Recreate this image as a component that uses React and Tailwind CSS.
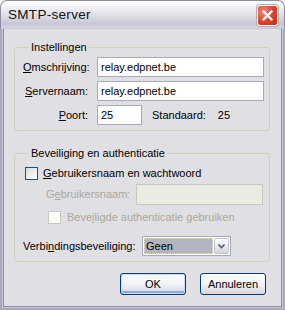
import React from 'react';

const font = { fontFamily: '"Liberation Sans", Arial, sans-serif' };

const TextBox = ({ value, className = '' }) => (
  <div className={`h-[20px] bg-white border border-[#a5acb5] flex items-center px-[3px] text-[11px] text-black ${className}`}>
    {value}
  </div>
);

const CheckBox = ({ disabled }) => (
  <div
    className={`w-[13px] h-[13px] shrink-0 border ${
      disabled
        ? 'border-[#cac8bb] bg-white'
        : 'border-[#1c5180] bg-gradient-to-br from-[#dcdcd7] to-white'
    }`}
  />
);

const Button = ({ children, isDefault }) => (
  <button
    className={`w-[66px] h-[22px] rounded-[3px] border border-[#003c74] text-[11px] text-black bg-gradient-to-b from-white via-[#f2f2f6] to-[#d6d6e0] ${
      isDefault ? 'shadow-[inset_0_0_0_1px_#c9dcf8,inset_0_-2px_0_1px_#8fa8e2]' : 'shadow-[inset_0_-2px_0_0_#d8d8e4]'
    }`}
  >
    {children}
  </button>
);

const App = () => {
  return (
    <div style={font} className="w-[285px] h-[310px] flex flex-col bg-[#a9a8bd] rounded-t-[7px] overflow-hidden">
      {/* Title bar */}
      <div className="h-[29px] shrink-0 flex items-center justify-between pl-[7px] pr-[6px] rounded-t-[7px] border border-b-0 border-[#8c8ca2] bg-[linear-gradient(to_bottom,#ffffff_0%,#f2f2f6_20%,#dcdce4_55%,#c8c8d6_80%,#d8d8e2_100%)]">
        <span className="text-[13.5px] text-[#111] tracking-[0.3px]">SMTP-server</span>
        <div className="w-[21px] h-[21px] rounded-[3px] border border-white flex items-center justify-center bg-[radial-gradient(circle_at_30%_30%,#f28b7a,#d6422e_55%,#c0321f)] shadow-[0_0_0_1px_#b8a8a8]">
          <svg width="11" height="11" viewBox="0 0 11 11">
            <path d="M1.5 1.5 L9.5 9.5 M9.5 1.5 L1.5 9.5" stroke="#fff" strokeWidth="2.2" strokeLinecap="square" />
          </svg>
        </div>
      </div>

      {/* Client area */}
      <div className="flex-1 flex flex-col mx-[3px] mb-[3px] border-x border-b border-[#8c8ca2] bg-[#e0dfe3] shadow-[0_0_0_1px_#c6c6d6] text-[11px] text-black">
        {/* Instellingen */}
        <fieldset className="mt-[12px] ml-[10px] mr-[11px] border border-[#d0d0bf] rounded-[3px] pl-[8px] pr-[5px] pb-[5px]">
          <legend className="ml-[6px] px-[2px] leading-[13px]">Instellingen</legend>
          <div className="grid grid-cols-[65px_1fr] gap-x-[9px] gap-y-[4px] items-center pt-[3px]">
            <span className="text-right"><u>O</u>mschrijving:</span>
            <TextBox value="relay.edpnet.be" />
            <span className="text-right"><u>S</u>ervernaam:</span>
            <TextBox value="relay.edpnet.be" />
            <span className="text-right"><u>P</u>oort:</span>
            <div className="flex items-center">
              <TextBox value="25" className="w-[45px]" />
              <span className="ml-[10px]">Standaard:</span>
              <span className="ml-[12px]">25</span>
            </div>
          </div>
        </fieldset>

        {/* Beveiliging */}
        <fieldset className="mt-[16px] ml-[10px] mr-[11px] border border-[#d0d0bf] rounded-[3px] pl-[8px] pr-[6px] pb-[5px]">
          <legend className="ml-[6px] px-[2px] leading-[13px]">Beveiliging en authenticatie</legend>
          <div className="flex flex-col pt-[7px]">
            <div className="flex items-center gap-[5px] pl-[2px] h-[13px]">
              <CheckBox />
              <span><u>G</u>ebruikersnaam en wachtwoord</span>
            </div>
            <div className="flex items-center mt-[4px] pl-[23px]">
              <span className="text-[#aca899] w-[90px]">G<u>e</u>bruikersnaam:</span>
              <div className="flex-1 h-[21px] bg-[#ebebe4] border border-[#c9c7ba]" />
            </div>
            <div className="flex items-center gap-[6px] mt-[6px] pl-[25px] h-[13px]">
              <CheckBox disabled />
              <span className="text-[#aca899]">Beve<u>i</u>ligde authenticatie gebruiken</span>
            </div>
            <div className="flex items-center mt-[12px]">
              <span className="w-[119px]">Verbi<u>n</u>dingsbeveiliging:</span>
              <div className="w-[89px] h-[20px] flex items-stretch bg-white border border-[#a5acb5] p-[1px]">
                <div className="flex-1 flex items-center pl-[2px] bg-[#b2b4bf] outline outline-1 outline-dotted outline-[#e8e0b0] -outline-offset-1">Geen</div>
                <div className="w-[15px] ml-[1px] flex items-center justify-center rounded-[2px] border border-[#c3c3d3] bg-gradient-to-b from-white to-[#d4d4de]">
                  <svg width="7" height="5" viewBox="0 0 7 5">
                    <path d="M0.5 0.5 L3.5 3.5 L6.5 0.5" stroke="#4d6185" strokeWidth="1.6" fill="none" />
                  </svg>
                </div>
              </div>
            </div>
          </div>
        </fieldset>

        {/* Buttons */}
        <div className="flex justify-end gap-[14px] mt-[11px] pr-[15px]">
          <Button isDefault>OK</Button>
          <Button>Annuleren</Button>
        </div>
      </div>
    </div>
  );
};

export default App;
